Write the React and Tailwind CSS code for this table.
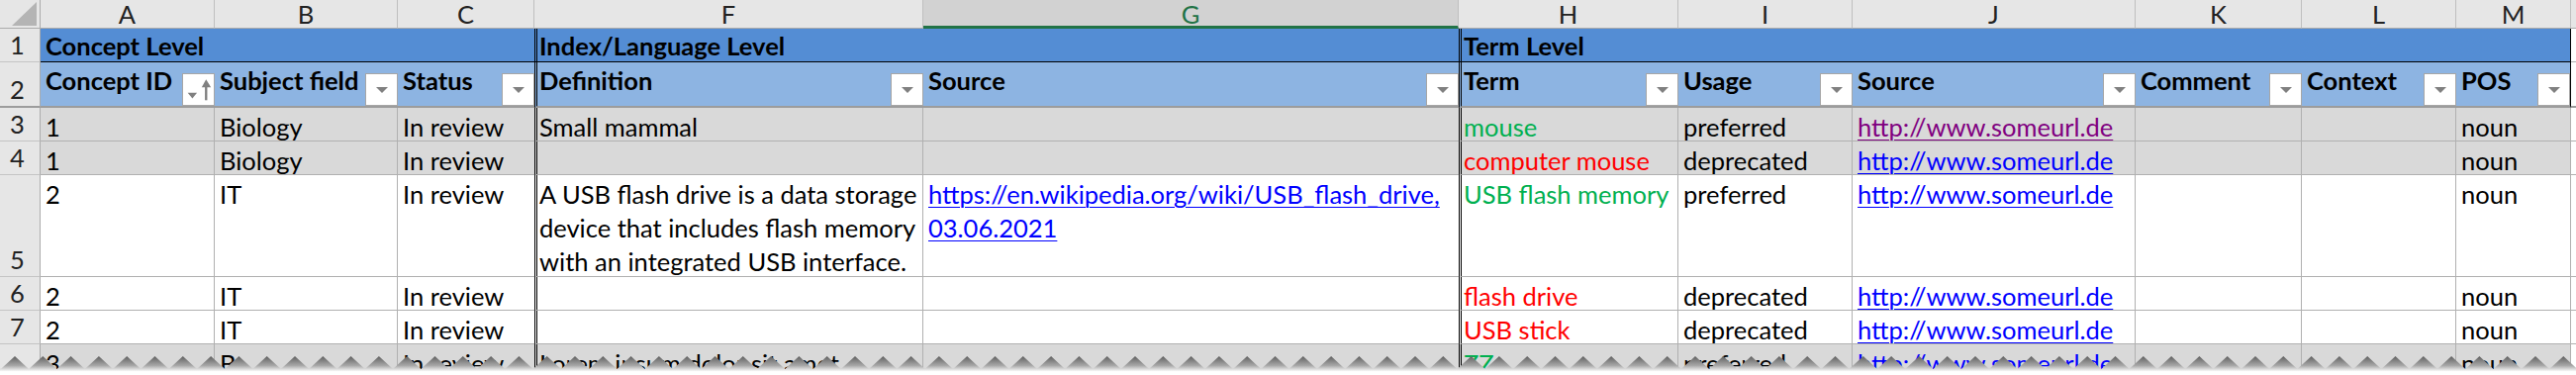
import React from "react";

const GRID =
  "grid grid-cols-[41px_176px_185px_138px_393px_541px_222px_176px_286px_168px_156px_116px_5px] grid-rows-[29px_34px_46px_34px_34px_103px_34px_34px_34px]";

const letters = ["A", "B", "C", "F", "G", "H", "I", "J", "K", "L", "M"];
const heads = ["Concept ID", "Subject field", "Status", "Definition", "Source", "Term", "Usage", "Source", "Comment", "Context", "POS"];
const dbl = [3, 5]; // F and H have a double line on the left

const URL = "http://www.someurl.de";
const GREEN = "text-[#00b050]";
const RED = "text-[#ff0000]";
const LINK = "text-[#0000ff] underline decoration-1 underline-offset-[3px]";
const VISITED = "text-[#800080] underline decoration-1 underline-offset-[3px]";

const rows = [
  { n: "3", gray: true, cells: ["1", "Biology", "In review", "Small mammal", "", { t: "mouse", cls: GREEN }, "preferred", { t: URL, cls: VISITED }, "", "", "noun"] },
  { n: "4", gray: true, cells: ["1", "Biology", "In review", "", "", { t: "computer mouse", cls: RED }, "deprecated", { t: URL, cls: LINK }, "", "", "noun"] },
  {
    n: "5",
    cells: [
      "2",
      "IT",
      "In review",
      { lines: ["A USB flash drive is a data storage", "device that includes flash memory", "with an integrated USB interface."] },
      { lines: ["https://en.wikipedia.org/wiki/USB_flash_drive,", "03.06.2021"], cls: LINK },
      { t: "USB flash memory", cls: GREEN },
      "preferred",
      { t: URL, cls: LINK },
      "",
      "",
      "noun",
    ],
  },
  { n: "6", cells: ["2", "IT", "In review", "", "", { t: "flash drive", cls: RED }, "deprecated", { t: URL, cls: LINK }, "", "", "noun"] },
  { n: "7", cells: ["2", "IT", "In review", "", "", { t: "USB stick", cls: RED }, "deprecated", { t: URL, cls: LINK }, "", "", "noun"] },
  { n: "", gray: true, cells: ["3", "B", "In review", "Lorem ipsum dolor sit amet.", "", { t: "ZZ", cls: GREEN }, "preferred", { t: URL, cls: LINK }, "", "", "noun"] },
];

const sides = (i) => {
  let c = dbl.includes(i) ? "pl-[2px] border-l-[3px] border-double border-l-black " : "pl-[5px] ";
  if (!dbl.includes(i + 1)) c += "border-r border-r-[#b0b0b0] ";
  return c;
};

const FilterArrow = () => (
  <svg width="14" height="8" viewBox="0 0 14 8">
    <polygon points="1,1 13,1 7,7" fill="#808080" />
  </svg>
);

const SortIcon = () => (
  <svg width="33" height="33" viewBox="0 0 33 33">
    <polygon points="5,20 15,20 10,26" fill="#808080" />
    <rect x="23.5" y="12" width="2.5" height="16" fill="#808080" />
    <polygon points="20,14 30,14 24.75,5.5" fill="#808080" />
  </svg>
);

const Filter = ({ sort }) => (
  <div className="self-end shrink-0 w-[33px] h-[33px] bg-white border border-[#a6a6a6] flex items-center justify-center">
    {sort ? <SortIcon /> : <FilterArrow />}
  </div>
);

const RowNum = ({ n, last }) => (
  <div
    className={
      "flex items-end justify-center pr-[5px] bg-[#e6e6e6] border-r border-r-[#ababab] leading-[34px] text-[#222] " +
      (last ? "border-b-2 border-b-[#9c9c9c]" : "border-b border-b-[#c4c4c4]")
    }
  >
    {n}
  </div>
);

const Content = ({ v }) => {
  if (typeof v === "string") return v;
  if (v.lines)
    return v.lines.map((l, k) => (
      <div key={k}>
        <span className={v.cls || ""}>{l}</span>
      </div>
    ));
  return <span className={v.cls}>{v.t}</span>;
};

const zigzag = () => {
  let d = "M0,22 L0,12 ";
  for (let x = 15 - 28.3; x < 2640; x += 28.3) {
    d += `L${x.toFixed(1)},3 L${(x + 14.15).toFixed(1)},16 `;
  }
  d += "L2603,22 Z";
  return d;
};

const App = () => {
  return (
    <div className="relative w-[2603px] h-[379px] overflow-hidden bg-white font-['Lato',sans-serif] text-[25.5px] text-black">
      <div className={GRID}>
        {/* column letters */}
        <div className="relative bg-[#e6e6e6] border-r border-b border-[#ababab]">
          <svg className="absolute left-0 top-0" width="41" height="29">
            <polygon points="12,26 37,26 37,2" fill="#b4b4b4" />
          </svg>
        </div>
        {letters.map((l) =>
          l === "G" ? (
            <div
              key={l}
              className="flex justify-center leading-[28px] bg-[#d2d2d2] text-[#217346] border-r border-r-[#bfbfbf] border-b-[3px] border-b-[#217346]"
            >
              {l}
            </div>
          ) : (
            <div key={l} className="flex justify-center leading-[28px] bg-[#e6e6e6] text-[#222] border-r border-r-[#bfbfbf] border-b border-b-[#ababab]">
              {l}
            </div>
          )
        )}
        <div className="bg-[#e6e6e6] border-b border-[#ababab]" />

        {/* row 1: groups */}
        <RowNum n="1" />
        {letters.map((l, i) => (
          <div
            key={l}
            className={
              "bg-[#548dd4] font-bold leading-[34px] whitespace-nowrap overflow-hidden border-b border-b-black " +
              (dbl.includes(i) ? "pl-[2px] border-l-[3px] border-double border-l-black " : "pl-[5px] ") +
              (i === 10 ? "border-r border-r-black" : "")
            }
          >
            {i === 0 ? "Concept Level" : i === 3 ? "Index/Language Level" : i === 5 ? "Term Level" : ""}
          </div>
        ))}
        <div className="border-b border-[#b0b0b0]" />

        {/* row 2: headers */}
        <RowNum n="2" last />
        {heads.map((h, i) => (
          <div
            key={i}
            className={
              "flex justify-between bg-[#8db4e2] font-bold leading-[34px] whitespace-nowrap border-b-2 border-b-[#9c9c9c] " +
              (dbl.includes(i) ? "pl-[2px] border-l-[3px] border-double border-l-black " : "pl-[5px] ") +
              (i === 10 ? "border-r border-r-black" : "")
            }
          >
            <span className="pt-[1px]">{h}</span>
            <Filter sort={i === 0} />
          </div>
        ))}
        <div className="border-b-2 border-[#9c9c9c]" />

        {/* data rows */}
        {rows.map((r, ri) => (
          <React.Fragment key={ri}>
            <RowNum n={r.n} />
            {r.cells.map((v, i) => (
              <div
                key={i}
                className={
                  "overflow-hidden whitespace-nowrap leading-[34px] pt-[2px] border-b border-b-[#b0b0b0] " +
                  sides(i) +
                  (r.gray ? "bg-[#d9d9d9]" : "bg-white")
                }
              >
                <Content v={v} />
              </div>
            ))}
            <div className="border-b border-[#b0b0b0]" />
          </React.Fragment>
        ))}
      </div>

      {/* torn edge */}
      <svg className="absolute left-0 bottom-0" width="2603" height="22">
        <defs>
          <linearGradient id="tear" x1="0" y1="0" x2="0" y2="1">
            <stop offset="0" stopColor="#5f5f5f" />
            <stop offset="0.5" stopColor="#a8a8a8" />
            <stop offset="0.82" stopColor="#ffffff" />
          </linearGradient>
        </defs>
        <path d={zigzag()} fill="url(#tear)" />
      </svg>
    </div>
  );
};

export default App;
